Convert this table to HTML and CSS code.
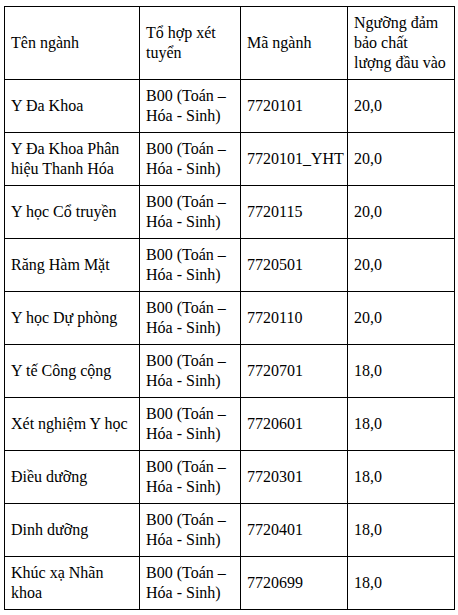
FILE: index.html
```html
<!DOCTYPE html>
<html lang="vi">
<head>
<meta charset="utf-8">
<title>Ngưỡng đảm bảo chất lượng đầu vào</title>
<link rel="stylesheet" href="styles.css">
</head>
<body>
<table class="admission">
  <colgroup>
    <col class="c-name">
    <col class="c-combo">
    <col class="c-code">
    <col class="c-score">
  </colgroup>
  <tr class="head">
    <td>Tên ngành</td>
    <td>Tổ hợp xét tuyển</td>
    <td>Mã ngành</td>
    <td>Ngưỡng đảm bảo chất lượng đầu vào</td>
  </tr>
  <tr><td>Y Đa Khoa</td><td>B00 (Toán – Hóa - Sinh)</td><td>7720101</td><td>20,0</td></tr>
  <tr><td>Y Đa Khoa Phân hiệu Thanh Hóa</td><td>B00 (Toán – Hóa - Sinh)</td><td>7720101_YHT</td><td>20,0</td></tr>
  <tr><td>Y học Cổ truyền</td><td>B00 (Toán – Hóa - Sinh)</td><td>7720115</td><td>20,0</td></tr>
  <tr><td>Răng Hàm Mặt</td><td>B00 (Toán – Hóa - Sinh)</td><td>7720501</td><td>20,0</td></tr>
  <tr><td>Y học Dự phòng</td><td>B00 (Toán – Hóa - Sinh)</td><td>7720110</td><td>20,0</td></tr>
  <tr><td>Y tế Công cộng</td><td>B00 (Toán – Hóa - Sinh)</td><td>7720701</td><td>18,0</td></tr>
  <tr><td>Xét nghiệm Y học</td><td>B00 (Toán – Hóa - Sinh)</td><td>7720601</td><td>18,0</td></tr>
  <tr><td>Điều dưỡng</td><td>B00 (Toán – Hóa - Sinh)</td><td>7720301</td><td>18,0</td></tr>
  <tr><td>Dinh dưỡng</td><td>B00 (Toán – Hóa - Sinh)</td><td>7720401</td><td>18,0</td></tr>
  <tr><td>Khúc xạ Nhãn khoa</td><td>B00 (Toán – Hóa - Sinh)</td><td>7720699</td><td>18,0</td></tr>
</table>
</body>
</html>
```
FILE: styles.css
```css
html, body {
  margin: 0;
  padding: 0;
  background: #fff;
}
body {
  padding: 6px 0 0 4px;
  font-family: "Times New Roman", "Liberation Serif", Tinos, serif;
  font-size: 16px;
  line-height: 20px;
  color: #000;
}
.admission {
  border-collapse: collapse;
  table-layout: fixed;
  width: 450px;
  font-family: "Times New Roman", "Liberation Serif", Tinos, serif;
}
.c-name { width: 135px; }
.c-combo { width: 101px; }
.c-code { width: 107px; }
.c-score { width: 107px; }
.admission td {
  border: 1px solid #000;
  padding: 6px 5px 6px 6px;
  vertical-align: middle;
  text-align: left;
  font-family: "Times New Roman", "Liberation Serif", Tinos, serif;
}
.admission tr { height: 53px; }
.admission tr.head { height: 73px; }
```
